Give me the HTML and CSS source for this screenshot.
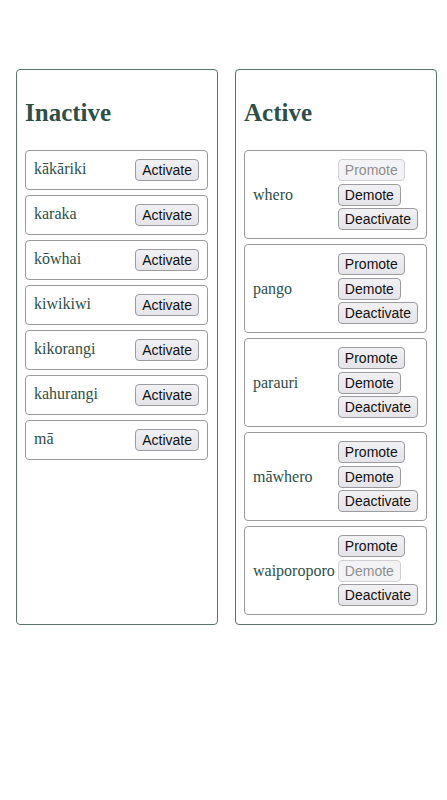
FILE: index.html
```html
<!DOCTYPE html>
<html lang="mi">
<head>
<meta charset="utf-8">
<title>Colours</title>
<link rel="stylesheet" href="styles.css">
</head>
<body>
<main class="board">
  <section class="panel">
    <h2 class="panel-title">Inactive</h2>
    <ul class="list">
      <li class="card card-inactive"><span class="label">kākāriki</span><div class="actions"><button class="btn">Activate</button></div></li>
      <li class="card card-inactive"><span class="label">karaka</span><div class="actions"><button class="btn">Activate</button></div></li>
      <li class="card card-inactive"><span class="label">kōwhai</span><div class="actions"><button class="btn">Activate</button></div></li>
      <li class="card card-inactive"><span class="label">kiwikiwi</span><div class="actions"><button class="btn">Activate</button></div></li>
      <li class="card card-inactive"><span class="label">kikorangi</span><div class="actions"><button class="btn">Activate</button></div></li>
      <li class="card card-inactive"><span class="label">kahurangi</span><div class="actions"><button class="btn">Activate</button></div></li>
      <li class="card card-inactive"><span class="label">mā</span><div class="actions"><button class="btn">Activate</button></div></li>
    </ul>
  </section>
  <section class="panel">
    <h2 class="panel-title">Active</h2>
    <ul class="list">
      <li class="card card-active"><span class="label">whero</span><div class="actions"><button class="btn" disabled>Promote</button><button class="btn">Demote</button><button class="btn">Deactivate</button></div></li>
      <li class="card card-active"><span class="label">pango</span><div class="actions"><button class="btn">Promote</button><button class="btn">Demote</button><button class="btn">Deactivate</button></div></li>
      <li class="card card-active"><span class="label">parauri</span><div class="actions"><button class="btn">Promote</button><button class="btn">Demote</button><button class="btn">Deactivate</button></div></li>
      <li class="card card-active"><span class="label">māwhero</span><div class="actions"><button class="btn">Promote</button><button class="btn">Demote</button><button class="btn">Deactivate</button></div></li>
      <li class="card card-active"><span class="label">waiporoporo</span><div class="actions"><button class="btn">Promote</button><button class="btn" disabled>Demote</button><button class="btn">Deactivate</button></div></li>
    </ul>
  </section>
</main>
</body>
</html>
```
FILE: styles.css
```css
body {
  margin: 0;
  background: #ffffff;
  font-family: "Liberation Serif", "DejaVu Serif", serif;
  color: #2d4f47;
}

.board {
  display: grid;
  grid-template-columns: 202px 202px;
  column-gap: 17px;
  padding: 69px 0 0 16px;
  align-items: stretch;
}

.panel {
  border: 1px solid #58726c;
  border-radius: 4px;
  padding: 0 9px 9px 8px;
  height: 556px;
  box-sizing: border-box;
}

.panel-title {
  font-size: 25px;
  font-weight: bold;
  line-height: 30px;
  margin: 28px 0 22px 0;
  color: #2d4f47;
}

.list {
  list-style: none;
  margin: 0;
  padding: 0;
  display: flex;
  flex-direction: column;
  gap: 5px;
}

.card {
  display: flex;
  justify-content: space-between;
  border: 1px solid #9a9a9a;
  border-radius: 4px;
  padding: 8px;
}

.card-inactive {
  align-items: flex-start;
}

.card-active {
  align-items: center;
}

.label {
  font-size: 16px;
  line-height: 18px;
  padding-top: 1px;
}

.actions {
  display: flex;
  flex-direction: column;
  align-items: flex-start;
  gap: 2.5px;
}

.btn {
  font-family: "Liberation Sans", Arial, sans-serif;
  font-size: 14px;
  line-height: 16px;
  color: #111111;
  background: linear-gradient(#f1f1f4, #e4e4e9);
  border: 1px solid #9b9ba0;
  border-radius: 4px;
  padding: 2px 6px;
  margin: 0;
}

.btn:disabled {
  color: #8d8d8d;
  background: #f3f3f5;
  border-color: #d0d0d4;
}
```
